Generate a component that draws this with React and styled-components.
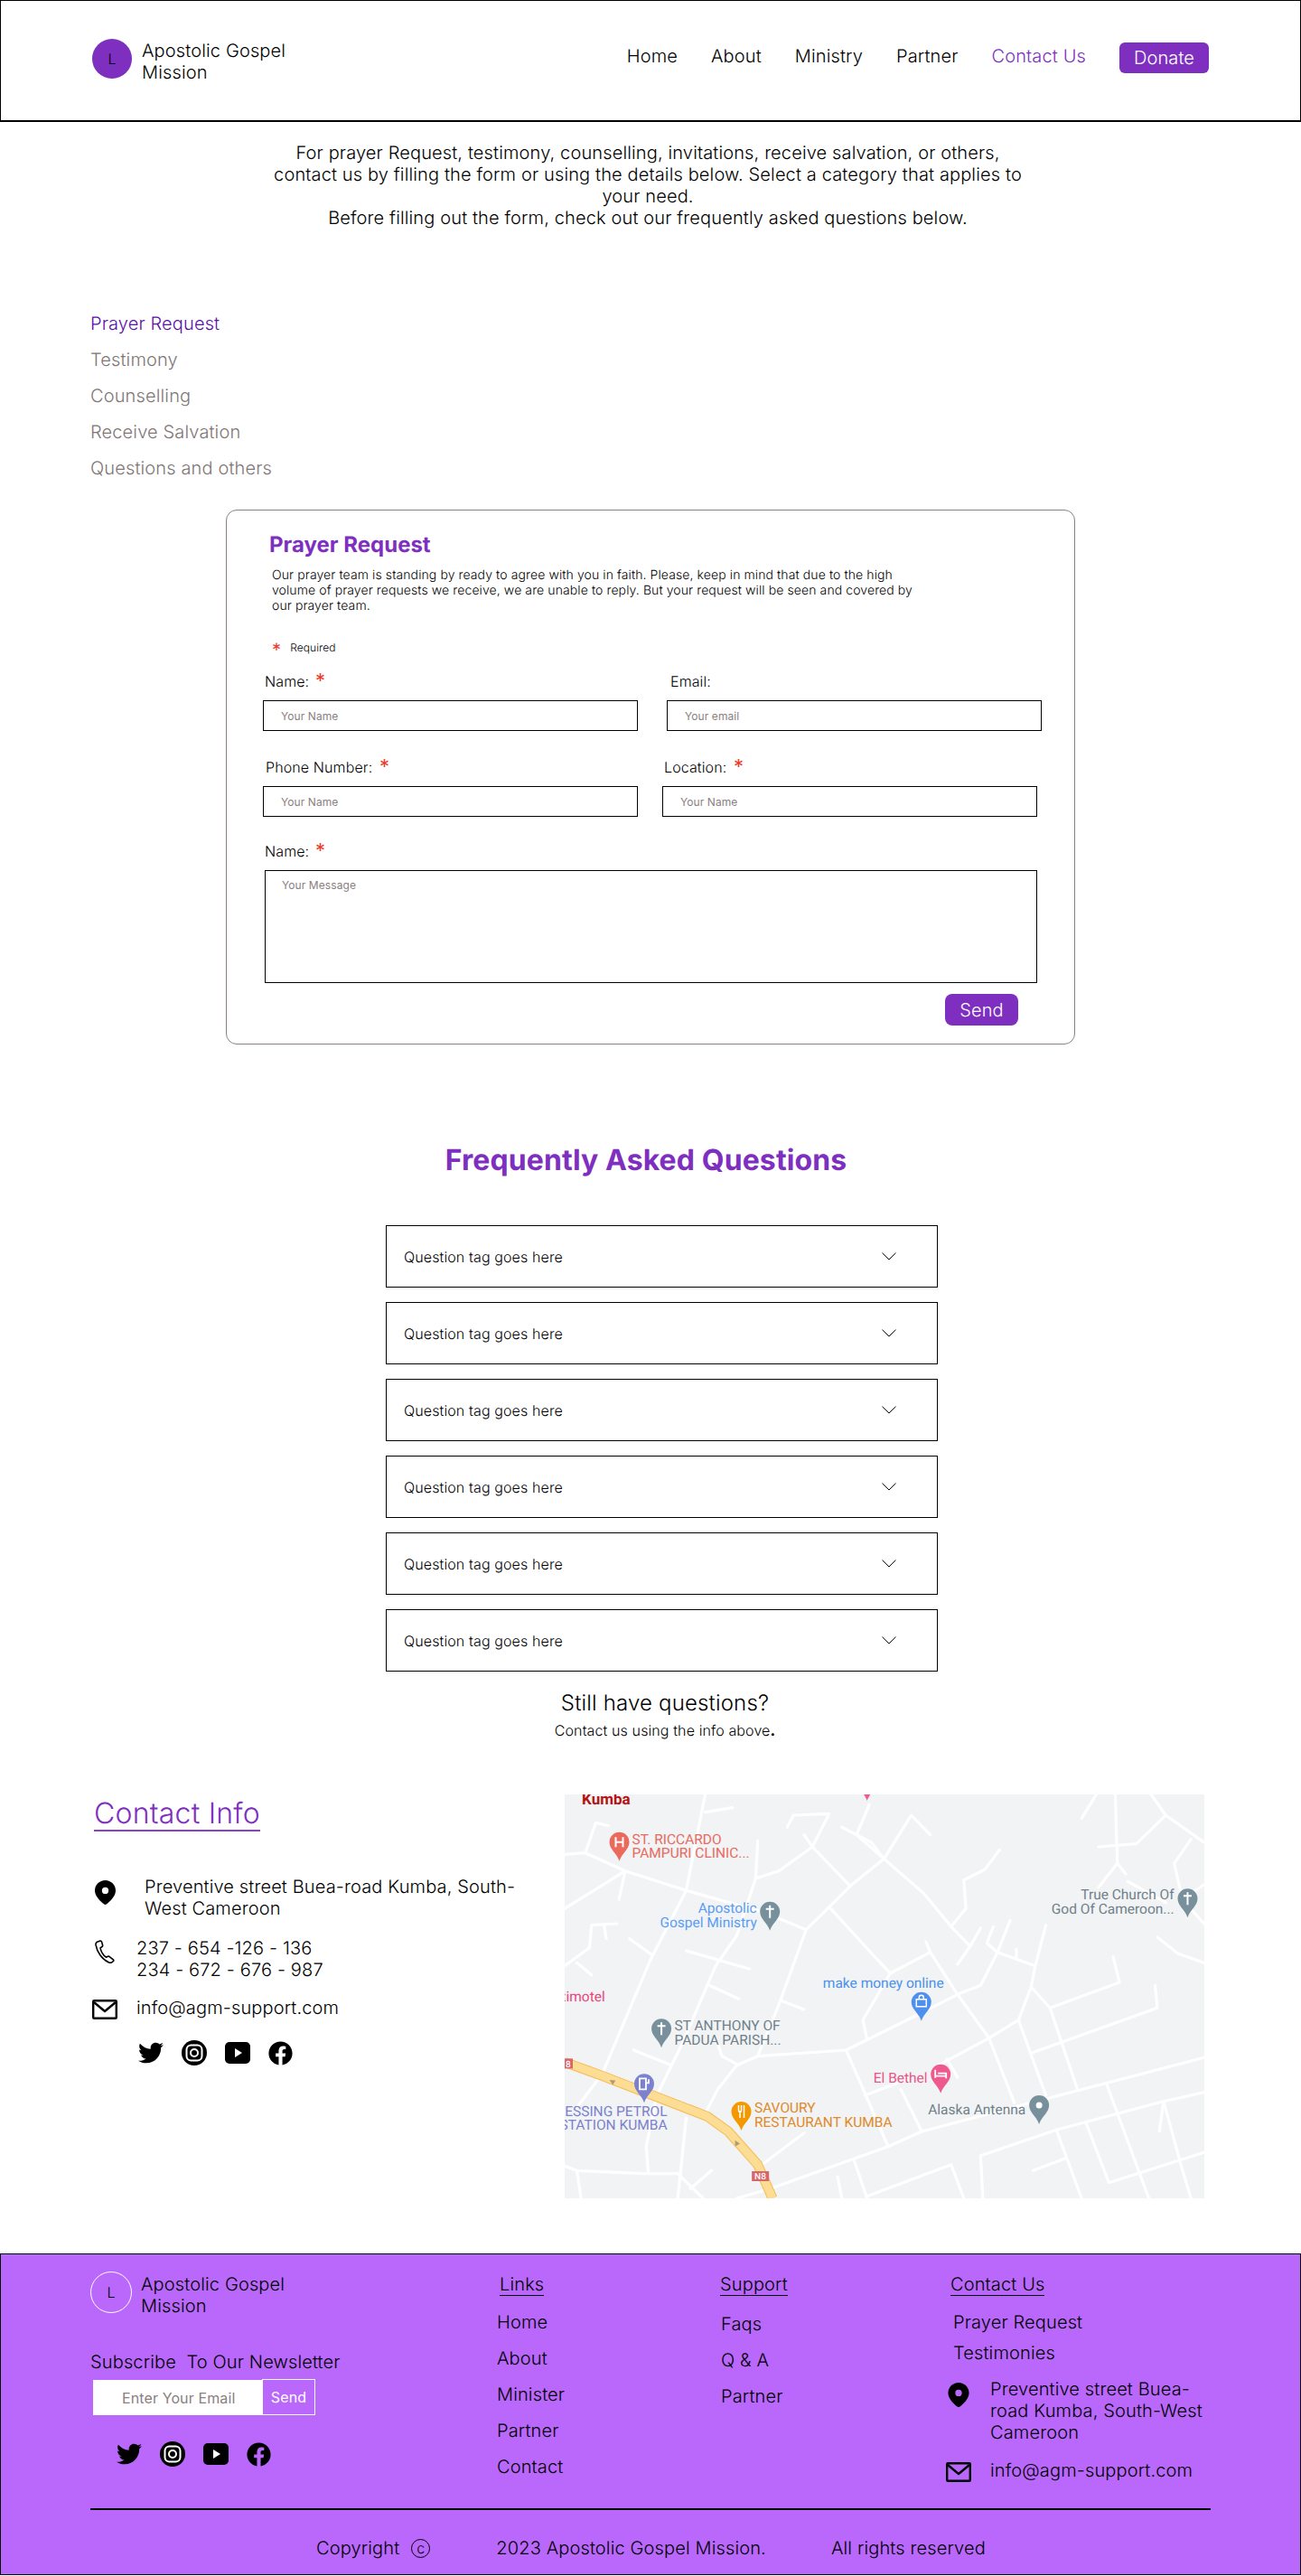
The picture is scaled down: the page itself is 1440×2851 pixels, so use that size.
import React from "react";
import styled, { createGlobalStyle } from "styled-components";
import { FaFacebook, FaTwitter } from "react-icons/fa";

const PURPLE = "#7e2fc0";
const LILAC = "#b968fb";
const GREY = "#8a8080";

const GlobalStyle = createGlobalStyle`
  * {
    box-sizing: border-box;
    letter-spacing: 0.007em;
  }
  body {
    margin: 0;
    background: #fff;
    color: #000;
    font-family: Inter, "Liberation Sans", sans-serif;
    font-weight: 350;
    text-rendering: geometricPrecision;
  }
`;

const Page = styled.div`
  width: 1440px;
  height: 2851px;
  overflow: hidden;
  font-size: 20px;
  line-height: 24px;
`;

/* header */
const Header = styled.header`
  height: 135px;
  padding: 0 101px 4px;
  display: flex;
  align-items: center;
  justify-content: space-between;
  border: 1px solid #000;
  border-bottom-width: 2px;
`;

const Brand = styled.div`
  display: flex;
  align-items: flex-start;
  height: ${(p) => p.$height}px;
  gap: ${(p) => p.$gap}px;
`;

const BrandMark = styled.div`
  flex: none;
  width: ${(p) => p.$size}px;
  height: ${(p) => p.$size}px;
  border-radius: 50%;
  display: flex;
  align-items: center;
  justify-content: center;
  font-size: 16px;
  background: ${(p) => (p.$outline ? "transparent" : PURPLE)};
  border: ${(p) => (p.$outline ? "1px solid #fff" : "none")};
`;

const BrandName = styled.div`
  width: 170px;
  margin-top: ${(p) => p.$top}px;
`;

const Nav = styled.nav`
  display: flex;
  align-items: center;
  gap: 37px;
`;

const NavLink = styled.a`
  margin-bottom: 6px;
  color: ${(p) => (p.$active ? PURPLE : "#000")};
`;

const DonateButton = styled.button`
  width: 99px;
  height: 34px;
  margin-bottom: 2px;
  border: 0;
  border-radius: 6px;
  background: ${PURPLE};
  color: #fff;
  font: inherit;
`;

/* intro + tabs */
const Intro = styled.p`
  width: 850px;
  margin: 22px 0 0 292px;
  text-align: center;
`;

const Tabs = styled.ul`
  list-style: none;
  margin: 85px 0 0;
  padding: 0 0 0 100px;
`;

const Tab = styled.li`
  height: 40px;
  line-height: 40px;
  color: ${(p) => (p.$active ? "#5a10a8" : "#807676")};
`;

/* prayer form */
const FormCard = styled.form`
  width: 940px;
  height: 592px;
  margin: 26px 0 0 250px;
  padding: 23px 0 0 40px;
  border: 1.5px solid ${GREY};
  border-radius: 12px;
`;

const FormTitle = styled.h2`
  margin: 0 0 0 7px;
  color: ${PURPLE};
  font-size: 24px;
  line-height: 29px;
  font-weight: 700;
  letter-spacing: 0;
`;

const FormNote = styled.p`
  width: 730px;
  margin: 11px 0 0 10px;
  font-size: 14px;
  line-height: 17px;
`;

const RequiredNote = styled.div`
  height: 16px;
  margin: 30px 0 0 10px;
  display: flex;
  align-items: center;
  gap: 10px;
  font-size: 12px;
  line-height: 16px;
`;

const Star = styled.span`
  color: #f0392b;
  font-size: 22px;
  font-weight: 400;
  line-height: 16px;
  margin-left: ${(p) => p.$offset || 0}px;
  vertical-align: -1px;
`;

const RequiredStar = styled(Star)`
  font-size: 20px;
  padding-top: 3px;
`;

const FieldRow = styled.div`
  display: flex;
  gap: ${(p) => p.$gap}px;
  margin-top: ${(p) => p.$top}px;
`;

const Field = styled.div`
  width: 415px;
`;

const FieldLabel = styled.label`
  display: block;
  height: 20px;
  padding-left: ${(p) => p.$indent}px;
  margin-bottom: 11px;
  font-size: 16px;
  line-height: 20px;
`;

const TextField = styled.input`
  display: block;
  width: 415px;
  height: 34px;
  padding: 0 19px;
  border: 1.5px solid #000;
  border-radius: 0;
  font-family: inherit;
  font-size: 12px;
  &::placeholder { color: ${GREY}; opacity: 1; }
`;

const MessageField = styled.textarea`
  display: block;
  width: 855px;
  height: 125px;
  margin-left: 2px;
  padding: 8px 18px;
  border: 1.5px solid #000;
  border-radius: 0;
  resize: none;
  font-family: inherit;
  font-size: 12px;
  line-height: 15px;
  &::placeholder { color: ${GREY}; opacity: 1; }
`;

const FormActions = styled.div`
  width: 836px;
  margin-top: 12px;
  display: flex;
  justify-content: flex-end;
`;

const SendButton = styled.button`
  width: 81px;
  height: 35px;
  border: 0;
  border-radius: 8px;
  background: ${PURPLE};
  color: #fff;
  font: inherit;
`;

/* faq */
const FaqTitle = styled.h2`
  width: 1430px;
  margin: 108px 0 0;
  text-align: center;
  color: ${PURPLE};
  font-size: 32px;
  line-height: 39px;
  font-weight: 700;
  letter-spacing: 0.1px;
`;

const FaqList = styled.div`
  width: 611px;
  margin: 53px 0 0 427px;
  display: flex;
  flex-direction: column;
  gap: 16px;
`;

const FaqItem = styled.div`
  height: 69px;
  padding: 0 45px 0 19px;
  display: flex;
  align-items: center;
  justify-content: space-between;
  border: 1px solid #000;
  font-size: 16px;
`;

const StillAsking = styled.div`
  width: 618px;
  margin: 20px 0 0 427px;
  text-align: center;
`;

const StillTitle = styled.div`
  font-size: 24px;
  line-height: 29px;
`;

const StillText = styled.div`
  margin-top: 7px;
  font-size: 16px;
  line-height: 19px;
  b { font-weight: 800; }
`;

/* contact + map */
const ContactSection = styled.section`
  margin-top: 61px;
  padding-left: 100px;
  display: grid;
  grid-template-columns: 525px 708px;
`;

const ContactTitle = styled.h2`
  display: inline-block;
  margin: 3px 0 0 4px;
  padding: 0;
  color: ${PURPLE};
  font-size: 32px;
  line-height: 36px;
  font-weight: 350;
  border-bottom: 2px solid #8a3fc8;
`;

const InfoRow = styled.div`
  display: flex;
  margin-top: ${(p) => p.$top}px;
`;

const IconSlot = styled.div`
  flex: none;
  width: ${(p) => p.$width || 32}px;
  padding-top: ${(p) => p.$drop || 0}px;
  display: flex;
  justify-content: center;
  align-items: flex-start;
`;

const InfoText = styled.div`
  width: ${(p) => p.$width || 420}px;
  margin-left: ${(p) => p.$indent}px;
`;

const Socials = styled.div`
  display: flex;
  align-items: center;
  gap: 20px;
  margin: ${(p) => p.$top}px 0 0 ${(p) => p.$left}px;
`;

const MapFrame = styled.div`
  width: 708px;
  height: 447px;
  background: #f1f3f4;
  overflow: hidden;
  svg { display: block; }
`;

const MapLabel = styled.text`
  font-family: Roboto, "Liberation Sans", sans-serif;
  font-size: ${(p) => p.$size || 15.500}px;
  font-weight: ${(p) => p.$weight || 400};
  letter-spacing: 0;
  fill: ${(p) => p.$color};
`;

/* footer */
const Footer = styled.footer`
  height: 356px;
  margin-top: 61px;
  padding: 19px 99px 0;
  background: ${LILAC};
  border: 1px solid #000;
`;

const FooterGrid = styled.div`
  height: 262px;
  display: grid;
  grid-template-columns: 450px 247px 250px 1fr;
`;

const Subscribe = styled.div`
  margin-top: 42px;
  white-space: pre;
`;

const NewsletterForm = styled.div`
  display: flex;
  margin: 7px 0 0 3px;
`;

const NewsletterInput = styled.input`
  width: 187px;
  height: 39px;
  margin-top: 1px;
  padding: 0 0 0 32px;
  border: 0;
  border-radius: 0;
  background: #fff;
  font-family: inherit;
  font-size: 16px;
  &::placeholder { color: ${GREY}; opacity: 1; }
`;

const NewsletterSend = styled.button`
  width: 59px;
  height: 40px;
  padding: 0;
  border: 1px solid #fff;
  background: transparent;
  color: #fff;
  font-family: inherit;
  font-size: 16px;
`;

const FooterColumn = styled.div`
  padding-top: ${(p) => p.$drop || 0}px;
`;

const ColumnTitle = styled.div`
  display: inline-block;
  margin-left: ${(p) => p.$indent || 0}px;
  border-bottom: 1px solid #000;
`;

const ColumnLinks = styled.div`
  margin: ${(p) => p.$top}px 0 0 ${(p) => p.$indent || 0}px;
  display: flex;
  flex-direction: column;
  gap: ${(p) => p.$gap}px;
`;

const FooterRule = styled.div`
  height: 2px;
  background: #000;
`;

const CopyrightRow = styled.div`
  margin-top: 30px;
  padding-left: 250px;
  display: flex;
  align-items: center;
`;

const CopyMark = styled.span`
  width: 21px;
  height: 21px;
  margin-left: 13px;
  display: inline-flex;
  align-items: center;
  justify-content: center;
  border: 1.5px solid #000;
  border-radius: 50%;
  font-size: 16px;
  line-height: 1;
`;

const CopyPart = styled.span`
  margin-left: ${(p) => p.$left}px;
`;

/* drawn icons */
const PinIcon = ({ w = 23, h = 27 }) => (
  <svg width={w} height={h} viewBox="0 0 24 28">
    <path
      fillRule="evenodd"
      d="M12 0C5.4 0 0 5.2 0 11.8 0 18.4 7 24.6 10.4 27.4a2.5 2.5 0 0 0 3.2 0C17 24.6 24 18.4 24 11.8 24 5.2 18.6 0 12 0Zm0 8a3.8 3.8 0 1 1 0 7.6A3.8 3.8 0 0 1 12 8Z"
    />
  </svg>
);

const PhoneIcon = () => (
  <svg width="22" height="26" viewBox="0 0 22 26" fill="none" stroke="#000" strokeWidth="1.6" strokeLinejoin="round">
    <path d="M2 2.6 6 1c1 0 1.400.5 1.600 1.200l1 3.600c.2.700 0 1.300-.6 1.700L6 8.800c.8 4 3.200 8 6.400 10.400l2-.9c.7-.3 1.300-.2 1.800.3l4.200 3.200c.5.500.5 1.100.1 1.700l-1.500 1.200c-1 .7-2.300.8-3.500.2C8 21.500 2.400 13.800 1 5.400c-.1-1.100.2-2.100 1-2.800Z" />
  </svg>
);

const MailIcon = ({ w = 28, h = 22 }) => (
  <svg width={w} height={h} viewBox="0 0 28 22" fill="none" stroke="#000" strokeWidth="2.4" strokeLinejoin="round">
    <rect x="1.200" y="1.200" width="25.600" height="19.600" rx="1" />
    <path d="m2 3 12 10L26 3" />
  </svg>
);

const InstagramIcon = () => (
  <svg width="28" height="28" viewBox="0 0 28 28">
    <circle cx="14" cy="14" r="14" />
    <rect x="5.500" y="5.500" width="17" height="17" rx="5" fill="none" stroke="#fff" strokeWidth="2" />
    <circle cx="14" cy="14" r="4" fill="none" stroke="#fff" strokeWidth="2" />
  </svg>
);

const YoutubeIcon = () => (
  <svg width="28" height="28" viewBox="0 0 28 28">
    <rect y="2" width="28" height="24" rx="5" />
    <path d="m11 9 8 5-8 5Z" fill="#fff" />
  </svg>
);

const Chevron = () => (
  <svg width="16" height="9" viewBox="0 0 16 9" fill="none" stroke="#000" strokeWidth="1">
    <path d="m.5.700 7.500 7.300L15.500.700" />
  </svg>
);

const SocialIcons = ({ top, left }) => (
  <Socials $top={top} $left={left}>
    <FaTwitter size={28} />
    <InstagramIcon />
    <YoutubeIcon />
    <FaFacebook size={27} />
  </Socials>
);

/* map, points are measured off the map picture and scaled down here */
const mx = (x) => (x - 11) / 2.148;
const my = (y) => (y - 51) / 3;
const toPoints = (pts) => pts.map(([x, y]) => `${mx(x).toFixed(1)},${my(y).toFixed(1)}`).join(" ");

const ROADS = [
  [[11, 250], [60, 245], [155, 305], [300, 370], [490, 445], [585, 500]],
  [[11, 430], [155, 305], [140, 400]],
  [[345, 51], [300, 370], [215, 600], [100, 980], [40, 1090]],
  [[60, 245], [85, 145], [115, 155]],
  [[345, 110], [410, 95]],
  [[470, 205], [465, 330], [420, 520], [370, 620], [290, 880], [230, 1050]],
  [[465, 330], [520, 305], [600, 225], [580, 185]],
  [[540, 160], [555, 120], [640, 115], [600, 225], [690, 355], [640, 425], [585, 500], [520, 750], [470, 920]],
  [[735, 85], [705, 185], [770, 265], [865, 380], [930, 490], [975, 555], [945, 615]],
  [[670, 160], [740, 210], [770, 265], [690, 355]],
  [[770, 265], [835, 120], [880, 185]],
  [[1045, 235], [1010, 300], [960, 335], [965, 430], [930, 490]],
  [[640, 425], [735, 570], [785, 645], [880, 575], [870, 540]],
  [[1000, 495], [975, 555]],
  [[880, 575], [945, 715], [1020, 860], [1080, 1075]],
  [[785, 645], [720, 800], [730, 865]],
  [[470, 920], [680, 900], [840, 790], [945, 715], [1000, 685], [1040, 575], [1070, 470]],
  [[1030, 490], [1015, 545], [1040, 575], [1130, 620], [1155, 485]],
  [[1130, 620], [1120, 690], [1090, 800], [1020, 860], [900, 950]],
  [[1085, 565], [1085, 590]],
  [[1120, 690], [1165, 760], [1230, 1030]],
  [[1090, 800], [1155, 1050]],
  [[1165, 760], [1330, 675], [1315, 590]],
  [[1120, 910], [1420, 760], [1415, 685]],
  [[680, 900], [780, 1220]],
  [[470, 920], [420, 950], [375, 1030], [345, 1110]],
  [[725, 1050], [800, 1010]],
  [[810, 1030], [860, 1170]],
  [[500, 1360], [780, 1220], [860, 1170], [1160, 1060], [1531, 925]],
  [[420, 1392], [500, 1360]],
  [[1000, 1250], [1180, 1165], [1435, 1070], [1531, 1040]],
  [[1000, 1250], [1005, 1392]],
  [[1125, 1300], [1200, 1260]],
  [[1250, 1140], [1305, 1340], [1531, 1240]],
  [[1300, 1015], [1400, 1392]],
  [[1180, 1165], [1240, 1392]],
  [[1435, 1070], [1480, 1300], [1500, 1392]],
  [[1435, 1070], [1425, 1170]],
  [[700, 1270], [730, 1392]],
  [[660, 1320], [670, 1392]],
  [[730, 1385], [930, 1280], [960, 1392]],
  [[1320, 51], [1325, 280], [1280, 360]],
  [[1280, 225], [1370, 215], [1440, 120], [1405, 51]],
  [[1440, 120], [1531, 210]],
  [[1275, 51], [1240, 130]],
  [[1325, 280], [1345, 315]],
  [[1500, 200], [1460, 280], [1480, 400], [1531, 480]],
  [[1350, 340], [1440, 410]],
  [[1531, 350], [1490, 390]],
  [[1420, 525], [1470, 580], [1531, 610]],
  [[11, 620], [70, 560], [75, 485], [135, 480]],
  [[105, 490], [110, 530]],
  [[40, 610], [75, 650]],
  [[165, 530], [220, 585]],
  [[300, 570], [450, 630]],
  [[355, 685], [425, 730]],
  [[525, 735], [580, 765]],
  [[175, 900], [265, 950]],
  [[375, 880], [385, 920], [425, 950]],
  [[920, 930], [945, 990]],
  [[11, 1285], [40, 1300], [200, 1310], [280, 1310], [340, 1392]],
  [[40, 1300], [50, 1392]],
  [[210, 1310], [205, 1220], [230, 1050]],
  [[300, 1125], [280, 1392]],
  [[360, 1300], [310, 1360]],
  [[480, 1280], [580, 1175]],
];

const HIGHWAY = [[11, 940], [100, 985], [350, 1120], [400, 1170], [470, 1280], [505, 1392]];

const LABELS = [
  { x: 52, y: 85, t: "Kumba", c: "#b31412", w: 700, s: 17 },
  { x: 171, y: 215, t: "ST. RICCARDO", c: "#ea6a5e" },
  { x: 171, y: 262, t: "PAMPURI CLINIC...", c: "#ea6a5e" },
  { x: 468, y: 445, t: "Apostolic", c: "#5a9cf8", a: "end" },
  { x: 468, y: 492, t: "Gospel Ministry", c: "#5a9cf8", a: "end" },
  { x: 1460, y: 400, t: "True Church Of", c: "#70808a", a: "end" },
  { x: 1460, y: 448, t: "God Of Cameroon...", c: "#70808a", a: "end" },
  { x: 625, y: 692, t: "make money online", c: "#4a90ee" },
  { x: 107, y: 738, t: "Ezimotel", c: "#e8467c", a: "end" },
  { x: 272, y: 835, t: "ST ANTHONY OF", c: "#70808a" },
  { x: 272, y: 881, t: "PADUA PARISH...", c: "#70808a" },
  { x: 255, y: 1118, t: "BLESSING PETROL", c: "#7b80cf", a: "end" },
  { x: 255, y: 1165, t: "STATION KUMBA", c: "#7b80cf", a: "end" },
  { x: 462, y: 1108, t: "SAVOURY", c: "#e08a2a" },
  { x: 462, y: 1155, t: "RESTAURANT KUMBA", c: "#e08a2a" },
  { x: 745, y: 1008, t: "El Bethel", c: "#e8558a" },
  { x: 875, y: 1112, t: "Alaska Antenna", c: "#70808a" },
];

const CrossGlyph = () => (
  <path d="M0-28v14M-4.500-24H4.500" stroke="#fff" strokeWidth="2" fill="none" />
);

const PINS = [
  { x: 141, y: 272, c: "#ea6a5e", g: <path d="M-4-26.500v11M4-26.500v11M-4-21H4" stroke="#fff" strokeWidth="2" fill="none" /> },
  { x: 499, y: 503, c: "#78909c", g: <CrossGlyph /> },
  { x: 1492, y: 460, c: "#78909c", g: <CrossGlyph /> },
  { x: 241, y: 892, c: "#78909c", g: <CrossGlyph /> },
  { x: 1139, y: 1146, c: "#78909c", g: <circle cy="-21" r="3.500" fill="#fff" /> },
  { x: 859, y: 803, c: "#4f8ff0", g: <path d="M-5.500-24h11v8h-11ZM-2.500-24v-2a2.500 2.500 0 0 1 5 0v2" stroke="#fff" strokeWidth="1.500" fill="none" /> },
  { x: 905, y: 1043, c: "#ef5a8e", g: <path d="M-6-26v9M-6-19H6v2.500M-3-22H6v3" stroke="#fff" strokeWidth="1.800" fill="none" /> },
  { x: 431, y: 1167, c: "#f29900", g: <path d="M-3-28v6a1.500 1.500 0 0 0 3 0v-6M-1.500-22v8M3-28v14" stroke="#fff" strokeWidth="1.500" fill="none" /> },
  { x: 200, y: 1075, c: "#7b80cf", g: <path d="M-5-27h7v12h-7ZM2-22h3v-4" stroke="#fff" strokeWidth="1.800" fill="none" /> },
  { x: 730, y: 72, c: "#ef5a8e", g: null },
];

const MapPicture = () => (
  <svg width="708" height="447" viewBox="0 0 708 447">
    {ROADS.map((r, i) => (
      <polyline key={i} points={toPoints(r)} fill="none" stroke="#fff" strokeWidth="3.2" strokeLinecap="round" strokeLinejoin="round" />
    ))}
    <polyline points={toPoints(HIGHWAY)} fill="none" stroke="#f4bd55" strokeWidth="11" strokeLinejoin="round" />
    <polyline points={toPoints(HIGHWAY)} fill="none" stroke="#fddc94" strokeWidth="9" strokeLinejoin="round" />
    {[[125, 1005, 30], [420, 1210, 60]].map(([x, y, deg]) => (
      <path key={x} d="M-3 2 0-4 3 2Z" fill="#b09a70" transform={`translate(${mx(x)} ${my(y)}) rotate(${deg - 90})`} />
    ))}
    <rect x={mx(456)} y={my(1302)} width="19" height="11" fill="#d9646a" />
    <MapLabel x={mx(476)} y={my(1330)} textAnchor="middle" $size={10} $weight={500} $color="#fff">N8</MapLabel>
    <rect x="0" y={my(928)} width="9" height="11" fill="#d9646a" />
    <MapLabel x="1" y={my(956)} $size={10} $weight={500} $color="#fff">8</MapLabel>
    {PINS.map((p) => (
      <g key={`${p.x}-${p.y}`} transform={`translate(${mx(p.x)} ${my(p.y)})`}>
        <path d="M0 0C-3-9-11-13-11-21A11 11 0 1 1 11-21C11-13 3-9 0 0Z" fill={p.c} />
        {p.g}
      </g>
    ))}
    {LABELS.map((l) => (
      <MapLabel key={l.t} x={mx(l.x)} y={my(l.y)} textAnchor={l.a || "start"} $color={l.c} $size={l.s} $weight={l.w}>
        {l.t}
      </MapLabel>
    ))}
  </svg>
);

const NAV_ITEMS = ["Home", "About", "Ministry", "Partner"];
const TABS = ["Testimony", "Counselling", "Receive Salvation", "Questions and others"];
const LINKS = ["Home", "About", "Minister", "Partner", "Contact"];
const SUPPORT = ["Faqs", "Q & A", "Partner"];
const FAQS = [1, 2, 3, 4, 5, 6];

const App = () => {
  return (
    <Page>
      <GlobalStyle />
      <Header>
        <Brand $gap={11} $height={44}>
          <BrandMark $size={44}>L</BrandMark>
          <BrandName $top={1}>Apostolic Gospel Mission</BrandName>
        </Brand>
        <Nav>
          {NAV_ITEMS.map((item) => (
            <NavLink key={item}>{item}</NavLink>
          ))}
          <NavLink $active>Contact Us</NavLink>
          <DonateButton type="button">Donate</DonateButton>
        </Nav>
      </Header>

      <Intro>
        For prayer Request, testimony, counselling, invitations, receive salvation, or others,
        <br />
        contact us by filling the form or using the details below. Select a category that applies to
        <br />
        your need.
        <br />
        Before filling out the form, check out our frequently asked questions below.
      </Intro>

      <Tabs>
        <Tab $active>Prayer Request</Tab>
        {TABS.map((tab) => (
          <Tab key={tab}>{tab}</Tab>
        ))}
      </Tabs>

      <FormCard>
        <FormTitle>Prayer Request</FormTitle>
        <FormNote>
          Our prayer team is standing by ready to agree with you in faith. Please, keep in mind that due to the high
          <br />
          volume of prayer requests we receive, we are unable to reply. But your request will be seen and covered by
          <br />
          our prayer team.
        </FormNote>
        <RequiredNote>
          <RequiredStar>*</RequiredStar>
          Required
        </RequiredNote>
        <FieldRow $gap={32} $top={19}>
          <Field>
            <FieldLabel $indent={2}>
              Name: <Star $offset={2}>*</Star>
            </FieldLabel>
            <TextField placeholder="Your Name" />
          </Field>
          <Field>
            <FieldLabel $indent={4}>Email:</FieldLabel>
            <TextField placeholder="Your email" />
          </Field>
        </FieldRow>
        <FieldRow $gap={27} $top={30}>
          <Field>
            <FieldLabel $indent={3}>
              Phone Number: <Star $offset={3}>*</Star>
            </FieldLabel>
            <TextField placeholder="Your Name" />
          </Field>
          <Field>
            <FieldLabel $indent={2}>
              Location: <Star $offset={3}>*</Star>
            </FieldLabel>
            <TextField placeholder="Your Name" />
          </Field>
        </FieldRow>
        <FieldRow $gap={0} $top={28}>
          <div>
            <FieldLabel $indent={2}>
              Name: <Star $offset={2}>*</Star>
            </FieldLabel>
            <MessageField placeholder="Your Message" />
          </div>
        </FieldRow>
        <FormActions>
          <SendButton type="button">Send</SendButton>
        </FormActions>
      </FormCard>

      <FaqTitle>Frequently Asked Questions</FaqTitle>
      <FaqList>
        {FAQS.map((n) => (
          <FaqItem key={n}>
            Question tag goes here
            <Chevron />
          </FaqItem>
        ))}
      </FaqList>
      <StillAsking>
        <StillTitle>Still have questions?</StillTitle>
        <StillText>
          Contact us using the info above<b>.</b>
        </StillText>
      </StillAsking>

      <ContactSection>
        <div>
          <ContactTitle>Contact Info</ContactTitle>
          <InfoRow $top={49}>
            <IconSlot $drop={5}>
              <PinIcon />
            </IconSlot>
            <InfoText $indent={28}>
              Preventive street Buea-road Kumba, South-
              <br />
              West Cameroon
            </InfoText>
          </InfoRow>
          <InfoRow $top={20}>
            <IconSlot $drop={3}>
              <PhoneIcon />
            </IconSlot>
            <InfoText $indent={19}>
              237 - 654 -126 - 136
              <br />
              234 - 672 - 676 - 987
            </InfoText>
          </InfoRow>
          <InfoRow $top={18}>
            <IconSlot $drop={3}>
              <MailIcon />
            </IconSlot>
            <InfoText $indent={19}>info@agm-support.com</InfoText>
          </InfoRow>
          <SocialIcons top={23} left={53} />
        </div>
        <MapFrame>
          <MapPicture />
        </MapFrame>
      </ContactSection>

      <Footer>
        <FooterGrid>
          <FooterColumn>
            <Brand $gap={10} $height={46}>
              <BrandMark $size={46} $outline>L</BrandMark>
              <BrandName $top={2}>Apostolic Gospel Mission</BrandName>
            </Brand>
            <Subscribe>Subscribe  To Our Newsletter</Subscribe>
            <NewsletterForm>
              <NewsletterInput placeholder="Enter Your Email" />
              <NewsletterSend type="button">Send</NewsletterSend>
            </NewsletterForm>
            <SocialIcons top={29} left={29} />
          </FooterColumn>
          <FooterColumn $drop={2}>
            <ColumnTitle $indent={3}>Links</ColumnTitle>
            <ColumnLinks $top={17} $gap={16}>
              {LINKS.map((link) => (
                <span key={link}>{link}</span>
              ))}
            </ColumnLinks>
          </FooterColumn>
          <FooterColumn $drop={2}>
            <ColumnTitle>Support</ColumnTitle>
            <ColumnLinks $top={19} $indent={1} $gap={16}>
              {SUPPORT.map((link) => (
                <span key={link}>{link}</span>
              ))}
            </ColumnLinks>
          </FooterColumn>
          <FooterColumn $drop={2}>
            <ColumnTitle $indent={5}>Contact Us</ColumnTitle>
            <ColumnLinks $top={17} $indent={8} $gap={10}>
              <span>Prayer Request</span>
              <span>Testimonies</span>
            </ColumnLinks>
            <InfoRow $top={16}>
              <IconSlot $width={28} $drop={5}>
                <PinIcon w={24} h={27} />
              </IconSlot>
              <InfoText $width={250} $indent={21}>
                Preventive street Buea-
                <br />
                road Kumba, South-West
                <br />
                Cameroon
              </InfoText>
            </InfoRow>
            <InfoRow $top={18}>
              <IconSlot $width={28} $drop={3}>
                <MailIcon />
              </IconSlot>
              <InfoText $width={250} $indent={21}>info@agm-support.com</InfoText>
            </InfoRow>
          </FooterColumn>
        </FooterGrid>
        <FooterRule />
        <CopyrightRow>
          Copyright
          <CopyMark>c</CopyMark>
          <CopyPart $left={73}>2023 Apostolic Gospel Mission.</CopyPart>
          <CopyPart $left={72}>All rights reserved</CopyPart>
        </CopyrightRow>
      </Footer>
    </Page>
  );
};

export default App;
